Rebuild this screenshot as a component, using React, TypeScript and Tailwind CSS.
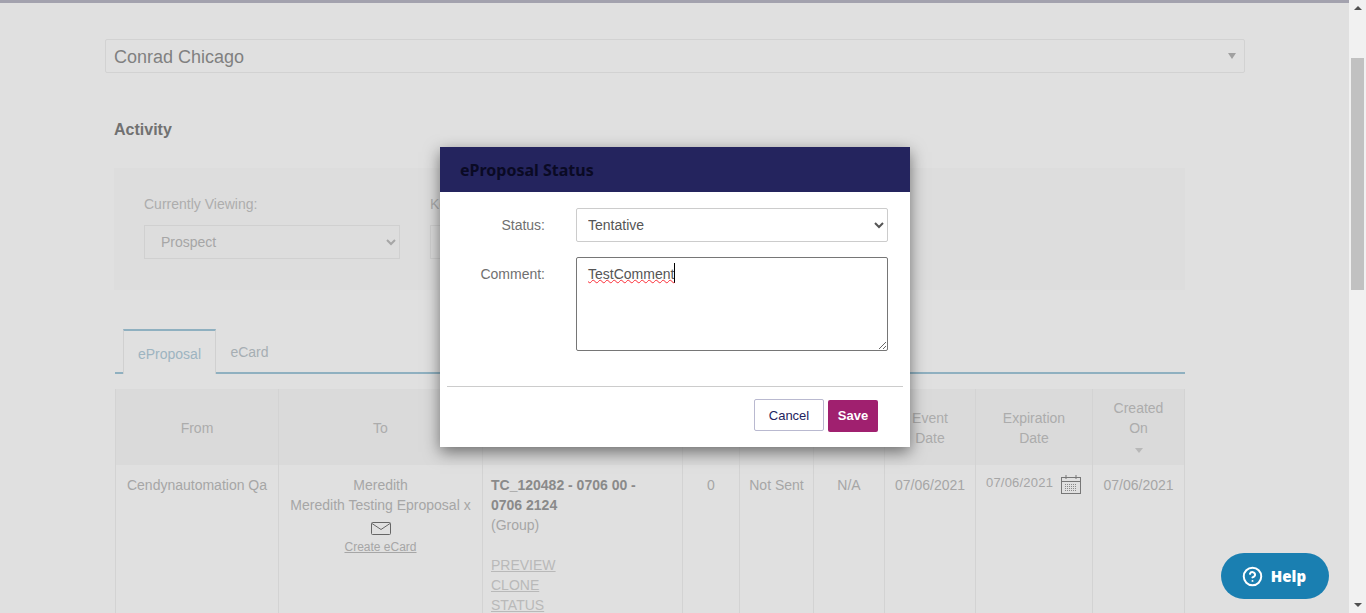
import { CircleHelp } from "lucide-react";

const cellBorder = "border-l border-[#d3d3d3] align-top";
const headCell = "border-l border-[#d3d3d3] bg-[#dadada] pt-[2px] text-center align-middle font-normal text-[#acacac]";

function EnvelopeIcon() {
  return (
    <svg width="20" height="13" viewBox="0 0 20 13" fill="none" stroke="#666" strokeWidth="1" className="mx-auto">
      <rect x="0.5" y="0.5" width="19" height="12" rx="1" />
      <path d="M1 1.5 L10 7.5 L19 1.5" />
    </svg>
  );
}

function CalendarIcon() {
  const dots = [];
  for (let row = 0; row < 4; row++) {
    for (let col = 0; col < 6; col++) {
      dots.push(<rect key={`${row}-${col}`} x={4 + col * 2} y={9 + row * 2} width="1" height="1" fill="#8a8a8a" stroke="none" />);
    }
  }
  return (
    <svg width="20" height="19" viewBox="0 0 20 19" fill="none" stroke="#777" strokeWidth="1">
      <rect x="0.5" y="2.5" width="19" height="16" />
      <path d="M0.5 6.5 H19.5 M5 0 V4 M15 0 V4" />
      {dots}
    </svg>
  );
}

function Scrollbar() {
  return (
    <div className="flex h-full w-[17px] shrink-0 flex-col items-center bg-[#f1f1f1]">
      <div className="mt-[6px] h-0 w-0 border-x-[4px] border-b-[4px] border-x-transparent border-b-[#505050]" />
      <div className="mt-[48px] h-[232px] w-[13px] bg-[#c1c1c1]" />
      <div className="mt-auto mb-[6px] h-0 w-0 border-x-[4px] border-t-[4px] border-x-transparent border-t-[#505050]" />
    </div>
  );
}

function ActivityTable() {
  return (
    <table className="ml-px w-[1069px] table-fixed border-collapse border-r border-[#d3d3d3] text-sm leading-5 text-[#a6a6a6]">
      <colgroup>
        <col className="w-[163px]" />
        <col className="w-[204px]" />
        <col className="w-[200px]" />
        <col className="w-[57px]" />
        <col className="w-[74px]" />
        <col className="w-[71px]" />
        <col className="w-[91px]" />
        <col className="w-[117px]" />
        <col className="w-[92px]" />
      </colgroup>
      <thead>
        <tr className="h-[76px]">
          <th className={headCell}>From</th>
          <th className={headCell}>To</th>
          <th className={headCell} />
          <th className={headCell} />
          <th className={headCell} />
          <th className={headCell} />
          <th className={headCell}>Event<br />Date</th>
          <th className={headCell}>Expiration<br />Date</th>
          <th className={headCell}>
            Created<br />On
            <div className="flex h-5 items-center justify-center pt-[5px]">
              <span className="h-0 w-0 border-x-[4px] border-t-[5px] border-x-transparent border-t-[#b8b8b8]" />
            </div>
          </th>
        </tr>
      </thead>
      <tbody>
        <tr>
          <td className={`${cellBorder} pt-[10px] text-center`}>Cendynautomation Qa</td>
          <td className={`${cellBorder} pt-[10px] text-center`}>
            Meredith<br />Meredith Testing Eproposal x
            <div className="mt-[7px]"><EnvelopeIcon /></div>
            <a className="mt-[3px] block text-xs leading-[18px] underline">Create eCard</a>
          </td>
          <td className={`${cellBorder} h-[160px] pt-[10px] pr-5 pl-2`}>
            <div className="font-bold text-[#8a8a8a]">TC_120482 - 0706 00 - 0706 2124</div>
            <div>(Group)</div>
            <div className="mt-5 text-[#b9b9b9] underline">PREVIEW<br />CLONE<br />STATUS</div>
          </td>
          <td className={`${cellBorder} pt-[10px] text-center`}>0</td>
          <td className={`${cellBorder} pt-[10px] text-center`}>Not Sent</td>
          <td className={`${cellBorder} pt-[10px] text-center`}>N/A</td>
          <td className={`${cellBorder} pt-[10px] text-center`}>07/06/2021</td>
          <td className={`${cellBorder} pt-[10px]`}>
            <div className="flex items-start pl-[10px] text-[13px] leading-4 tracking-[0.2px]">
              <span>07/06/2021</span>
              <span className="ml-2"><CalendarIcon /></span>
            </div>
          </td>
          <td className={`${cellBorder} pt-[10px] text-center`}>07/06/2021</td>
        </tr>
      </tbody>
    </table>
  );
}

function StatusModal() {
  return (
    <div className="absolute top-[147px] left-[440px] h-[300px] w-[470px] bg-white font-['Liberation_Sans',sans-serif] shadow-[0_5px_15px_rgba(0,0,0,0.5)]">
      <div className="flex h-[45px] items-center bg-[#24245e] pl-5 font-['Noto_Sans',sans-serif] text-base font-bold text-[#0a0a24]">
        eProposal Status
      </div>
      <div className="flex items-center pt-4">
        <label className="w-[105px] text-right text-sm text-[#707070]">Status:</label>
        <select className="ml-[31px] h-[34px] w-[312px] rounded-[2px] border border-[#ccc] bg-white pl-[7px] text-sm text-[#555]" defaultValue="Tentative">
          <option>Tentative</option>
        </select>
      </div>
      <div className="mt-[15px] flex items-start">
        <label className="mt-[7px] w-[105px] text-right text-sm text-[#707070]">Comment:</label>
        <div className="relative ml-[31px] h-[94px] w-[312px]">
          <textarea
            className="block h-full w-full rounded-[2px] border border-[#767676] bg-white px-[11px] py-[6px] text-sm leading-5 text-[#555]"
            defaultValue="TestComment"
            spellCheck={false}
          />
          <span className="pointer-events-none absolute top-[6px] left-[12px] border-r border-black text-sm leading-5 text-transparent underline decoration-red-500 decoration-wavy decoration-1">
            TestComment
          </span>
        </div>
      </div>
      <div className="mx-[7px] mt-[35px] border-t border-[#ccc]" />
      <div className="mt-3 flex items-start justify-end pr-8">
        <button className="h-8 w-[70px] rounded-[2px] border border-[#b9b9d0] bg-white pt-px text-[13px] text-[#24245e]">Cancel</button>
        <button className="mt-px ml-1 h-8 w-[50px] rounded-[2px] bg-[#a0206f] pb-px text-[13px] font-bold text-white">Save</button>
      </div>
    </div>
  );
}

export default function App() {
  return (
    <div className="relative flex h-[613px] w-[1366px] overflow-hidden bg-[#e0e0e0] font-['Liberation_Sans',sans-serif]">
      <main className="w-[1349px] shrink-0">
        <div className="h-[3px] bg-[#a3a2ae]" />
        <div className="mt-9 ml-[105px] flex h-[34px] w-[1140px] items-center justify-between rounded-[2px] border border-[#d2d2d2] pr-2 pl-2">
          <span className="pt-[2px] text-lg text-[#808080]">Conrad Chicago</span>
          <span className="h-0 w-0 border-x-[4px] border-t-[6px] border-x-transparent border-t-[#a0a0a0]" />
        </div>
        <div className="ml-[114px] w-[1071px]">
          <h2 className="mt-[47px] text-base leading-5 font-bold text-[#717171]">Activity</h2>
          <section className="mt-[28px] flex h-[122px] gap-[30px] bg-[#dddddd] pt-[26px] pl-[30px] text-sm text-[#adadad]">
            <div>
              <div className="leading-5">Currently Viewing:</div>
              <select className="mt-[11px] h-[34px] w-[256px] border border-[#d0d0d0] bg-transparent pl-3 text-sm text-[#a6a6a6]" defaultValue="Prospect">
                <option>Prospect</option>
              </select>
            </div>
            <div>
              <div className="leading-5">Keyword:</div>
              <div className="mt-[11px] h-[34px] w-[200px] border border-[#d0d0d0]" />
            </div>
          </section>
          <div className="mt-[39px] ml-px flex h-[45px] border-b-2 border-[#8fb0c0] pl-2 text-sm">
            <div className="mb-[-2px] flex h-[45px] w-[93px] items-center justify-center border-x border-t-2 border-x-[#d0d0d0] border-t-[#8fb0c0] bg-[#e0e0e0] pt-[2px] text-[#9db4c0]">
              eProposal
            </div>
            <div className="flex w-[67px] items-center justify-center pt-[2px] text-[#a6aeb3]">eCard</div>
          </div>
          <div className="mt-[15px]">
            <ActivityTable />
          </div>
        </div>
      </main>
      <Scrollbar />
      <StatusModal />
      <button className="absolute top-[553px] left-[1221px] flex h-[46px] w-[108px] items-center justify-center gap-2 rounded-full bg-[#1a7fb1] pr-[2px] font-['Open_Sans',sans-serif] text-[15px] font-extrabold text-white">
        <CircleHelp size={21} strokeWidth={2.25} />
        Help
      </button>
    </div>
  );
}
